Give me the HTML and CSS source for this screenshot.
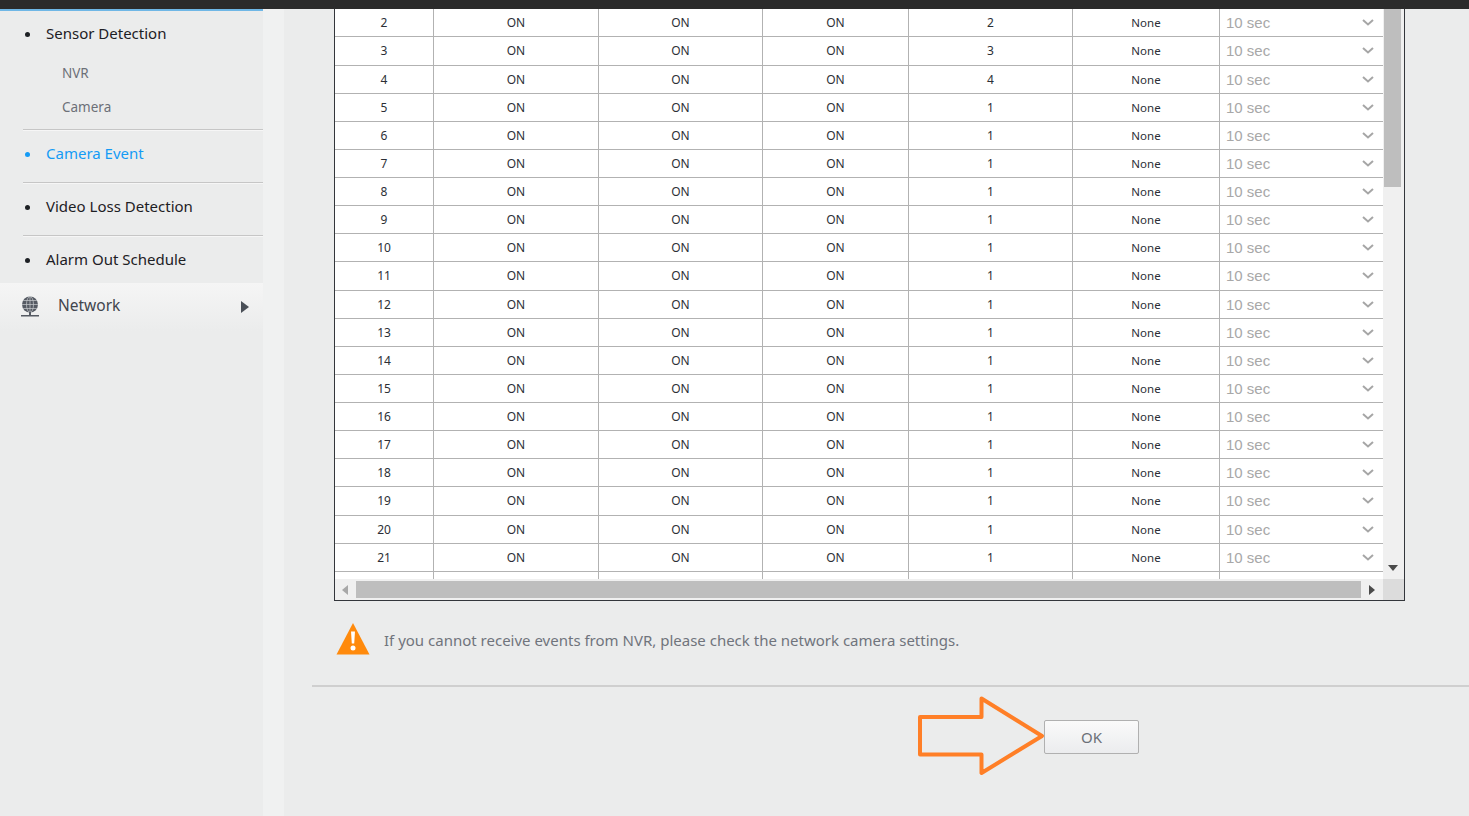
FILE: index.html
```html
<!DOCTYPE html>
<html lang="en">
<head>
<meta charset="utf-8">
<title>Camera Event</title>
<link rel="stylesheet" href="styles.css">
</head>
<body>
<svg class="defs" width="0" height="0" aria-hidden="true"><symbol id="chev" viewBox="0 0 12 7"><path d="M1 1l5 4.500 5-4.500" fill="none" stroke="#a6a6a6" stroke-width="2"/></symbol></svg>
<div class="topbar"></div>
<div class="layout">
  <aside class="sidebar">
    <ul class="menu">
      <li class="group">
        <div class="item">Sensor Detection</div>
        <div class="sub">NVR</div>
        <div class="sub">Camera</div>
      </li>
      <li class="group single active"><div class="item">Camera Event</div></li>
      <li class="group single"><div class="item">Video Loss Detection</div></li>
      <li class="group single last"><div class="item">Alarm Out Schedule</div></li>
    </ul>
    <div class="network">
      <svg class="globe" width="18" height="22" viewBox="0 0 18 22"><circle cx="9" cy="8.500" r="8" fill="#555a63"/><g fill="none" stroke="#c9cbce" stroke-width=".7"><ellipse cx="9" cy="8.500" rx="3.500" ry="8"/><path d="M9 .5v16M1 8.500h16M2.200 4.500h13.600M2.200 12.500h13.600"/></g><path d="M8 16h2v3H8zM0 19h18v1.500H0z" fill="#555a63"/></svg>
      <span class="net-label">Network</span>
      <svg class="net-arrow" width="8" height="12" viewBox="0 0 8 12"><path d="M0 0l8 6-8 6z" fill="#4a4f57"/></svg>
    </div>
  </aside>
  <div class="strip"></div>
  <main class="main">
    <div class="box">
      <div class="scroller">
        <div class="rows">
          <div class="row"><span>2</span><span>ON</span><span>ON</span><span>ON</span><span>2</span><span>None</span><span class="sel">10 sec<svg class="chev"><use href="#chev"/></svg></span></div>
          <div class="row"><span>3</span><span>ON</span><span>ON</span><span>ON</span><span>3</span><span>None</span><span class="sel">10 sec<svg class="chev"><use href="#chev"/></svg></span></div>
          <div class="row"><span>4</span><span>ON</span><span>ON</span><span>ON</span><span>4</span><span>None</span><span class="sel">10 sec<svg class="chev"><use href="#chev"/></svg></span></div>
          <div class="row"><span>5</span><span>ON</span><span>ON</span><span>ON</span><span>1</span><span>None</span><span class="sel">10 sec<svg class="chev"><use href="#chev"/></svg></span></div>
          <div class="row"><span>6</span><span>ON</span><span>ON</span><span>ON</span><span>1</span><span>None</span><span class="sel">10 sec<svg class="chev"><use href="#chev"/></svg></span></div>
          <div class="row"><span>7</span><span>ON</span><span>ON</span><span>ON</span><span>1</span><span>None</span><span class="sel">10 sec<svg class="chev"><use href="#chev"/></svg></span></div>
          <div class="row"><span>8</span><span>ON</span><span>ON</span><span>ON</span><span>1</span><span>None</span><span class="sel">10 sec<svg class="chev"><use href="#chev"/></svg></span></div>
          <div class="row"><span>9</span><span>ON</span><span>ON</span><span>ON</span><span>1</span><span>None</span><span class="sel">10 sec<svg class="chev"><use href="#chev"/></svg></span></div>
          <div class="row"><span>10</span><span>ON</span><span>ON</span><span>ON</span><span>1</span><span>None</span><span class="sel">10 sec<svg class="chev"><use href="#chev"/></svg></span></div>
          <div class="row"><span>11</span><span>ON</span><span>ON</span><span>ON</span><span>1</span><span>None</span><span class="sel">10 sec<svg class="chev"><use href="#chev"/></svg></span></div>
          <div class="row"><span>12</span><span>ON</span><span>ON</span><span>ON</span><span>1</span><span>None</span><span class="sel">10 sec<svg class="chev"><use href="#chev"/></svg></span></div>
          <div class="row"><span>13</span><span>ON</span><span>ON</span><span>ON</span><span>1</span><span>None</span><span class="sel">10 sec<svg class="chev"><use href="#chev"/></svg></span></div>
          <div class="row"><span>14</span><span>ON</span><span>ON</span><span>ON</span><span>1</span><span>None</span><span class="sel">10 sec<svg class="chev"><use href="#chev"/></svg></span></div>
          <div class="row"><span>15</span><span>ON</span><span>ON</span><span>ON</span><span>1</span><span>None</span><span class="sel">10 sec<svg class="chev"><use href="#chev"/></svg></span></div>
          <div class="row"><span>16</span><span>ON</span><span>ON</span><span>ON</span><span>1</span><span>None</span><span class="sel">10 sec<svg class="chev"><use href="#chev"/></svg></span></div>
          <div class="row"><span>17</span><span>ON</span><span>ON</span><span>ON</span><span>1</span><span>None</span><span class="sel">10 sec<svg class="chev"><use href="#chev"/></svg></span></div>
          <div class="row"><span>18</span><span>ON</span><span>ON</span><span>ON</span><span>1</span><span>None</span><span class="sel">10 sec<svg class="chev"><use href="#chev"/></svg></span></div>
          <div class="row"><span>19</span><span>ON</span><span>ON</span><span>ON</span><span>1</span><span>None</span><span class="sel">10 sec<svg class="chev"><use href="#chev"/></svg></span></div>
          <div class="row"><span>20</span><span>ON</span><span>ON</span><span>ON</span><span>1</span><span>None</span><span class="sel">10 sec<svg class="chev"><use href="#chev"/></svg></span></div>
          <div class="row"><span>21</span><span>ON</span><span>ON</span><span>ON</span><span>1</span><span>None</span><span class="sel">10 sec<svg class="chev"><use href="#chev"/></svg></span></div>
          <div class="row row-clipped"><span></span><span></span><span></span><span></span><span></span><span></span><span class="sel"></span></div>
        </div>
      </div>
      <div class="vbar">
        <div class="vthumb"></div>
        <svg class="varrow" width="10" height="6" viewBox="0 0 10 6"><path d="M0 0h10L5 6z" fill="#4a4a4a"/></svg>
      </div>
      <div class="hbar">
        <svg class="harrow-l" width="6" height="10" viewBox="0 0 6 10"><path d="M6 0v10L0 5z" fill="#a8a8a8"/></svg>
        <div class="hthumb"></div>
        <svg class="harrow-r" width="6" height="10" viewBox="0 0 6 10"><path d="M0 0v10l6-5z" fill="#4a4a4a"/></svg>
      </div>
      <div class="corner"></div>
    </div>
    <div class="notice">
      <svg class="warn" width="34" height="33" viewBox="0 0 34 33"><path d="M17 1L33.500 32.500H.500z" fill="#ff8a0c"/><path d="M15 9.500h4l-.8 12h-2.400z" fill="#fff"/><circle cx="17" cy="26" r="2.500" fill="#fff"/></svg>
      <span class="notice-text">If you cannot receive events from NVR, please check the network camera settings.</span>
    </div>
    <div class="footer">
      <button class="ok" type="button">OK</button>
      <svg class="callout" width="132" height="84" viewBox="0 0 132 84"><path d="M2 22H63.500V3.500L124 41 63.500 78V59.500H2z" fill="none" stroke="#ff7f27" stroke-width="4" stroke-linejoin="round"/></svg>
    </div>
  </main>
</div>
</body>
</html>
```
FILE: styles.css
```css
* { box-sizing: border-box; }
html, body { margin: 0; height: 100%; overflow: hidden; }
body {
  background: #ebecec;
  font-family: "Noto Sans", "Open Sans", sans-serif;
  color: #222;
  display: flex;
  flex-direction: column;
}
.defs { position: absolute; }
.topbar { height: 9px; background: #2b2b2b; flex: none; }
.layout { flex: 1; display: flex; min-height: 0; }

.sidebar { width: 263px; flex: none; background: #ebecec; border-top: 2px solid #6fb7e6; }
.menu { list-style: none; margin: 0; padding: 0; }
.group {
  margin-left: 23px;
  height: 119px;
  border-bottom: 1px solid #c6c6c6;
  box-shadow: 0 1px 0 #f6f6f6;
  margin-bottom: 1px;
}
.group.single { height: 52px; }
.group.last { border-bottom: 0; box-shadow: none; height: 46px; margin-bottom: 0; }
.item {
  position: relative;
  height: 48px;
  padding: 11px 0 0 23px;
  font-size: 15px;
  line-height: 22px;
  color: #1d2024;
}
.single .item { height: 46px; }
.item::before {
  content: "";
  position: absolute;
  left: 2px;
  top: 21px;
  width: 5px;
  height: 5px;
  border-radius: 50%;
  background: currentColor;
}
.active .item { color: #149bf5; }
.sub { height: 34px; padding: 4px 0 0 39px; font-size: 13.500px; line-height: 20px; color: #6c7078; }
.network {
  height: 48px;
  display: flex;
  align-items: center;
  padding: 0 14px 0 21px;
  background: linear-gradient(#f5f5f5, #ebecec);
}
.globe { margin-right: 19px; flex: none; }
.net-label { flex: 1; font-size: 15.500px; color: #41454d; margin-top: -4px; }

.strip { width: 21px; flex: none; background: #f0f1f1; }
.main { flex: 1; min-width: 0; padding-left: 28px; }

.box {
  margin-left: 22px;
  width: 1071px;
  height: 592px;
  border: 1px solid #33363b;
  border-top: 0;
  display: grid;
  grid-template-columns: 1048px 21px;
  grid-template-rows: 570px 21px;
  background: #f0f0f0;
}
.scroller { background: #fff; overflow: hidden; padding-top: .3px; }
.row {
  display: grid;
  grid-template-columns: 99px 165px 164px 146px 164px 147px 163px;
  height: 28.125px;
  border-bottom: 1px solid #b2b2b2;
  font-size: 12px;
  color: #2c2f36;
}
.row > span {
  display: flex;
  align-items: center;
  justify-content: center;
  border-right: 1px solid #b2b2b2;
  line-height: 27px;
}
.row > span:nth-child(6) { font-size: 11.500px; }
.row > .sel {
  border-right: 0;
  justify-content: space-between;
  padding: 0 9px 0 6px;
  font-family: "Liberation Sans", Arial, sans-serif;
  font-size: 15px;
  color: #a8a8a8;
}
.chev { width: 12px; height: 7px; }

.vbar { display: flex; flex-direction: column; align-items: flex-start; }
.vthumb { width: 17px; height: 178px; margin-left: 1px; background: #bebebe; }
.varrow { margin: auto 0 8px 5px; }
.hbar { display: flex; align-items: center; }
.harrow-l { margin-left: 7px; flex: none; }
.hthumb { width: 1005px; height: 17px; margin-left: 8px; background: #bebebe; flex: none; }
.harrow-r { margin-left: 8px; flex: none; }
.corner { background: #dcdcdc; }

.notice { display: flex; align-items: center; margin: 21px 0 0 24px; height: 33px; }
.warn { flex: none; }
.notice-text { margin: 2px 0 0 14px; font-size: 15px; color: #70747c; }

.footer {
  position: relative;
  margin-top: 30px;
  height: 60px;
  border-top: 2px solid #cfcfcf;
}
.ok {
  display: block;
  margin: 33px 0 0 732px;
  width: 95px;
  height: 34px;
  border: 1px solid #b0b0b0;
  border-radius: 2px;
  background: linear-gradient(#fafafa, #ebecee);
  font: 15px "Noto Sans", sans-serif;
  color: #6c7078;
}
.callout { position: absolute; left: 606px; top: 8px; }
```
